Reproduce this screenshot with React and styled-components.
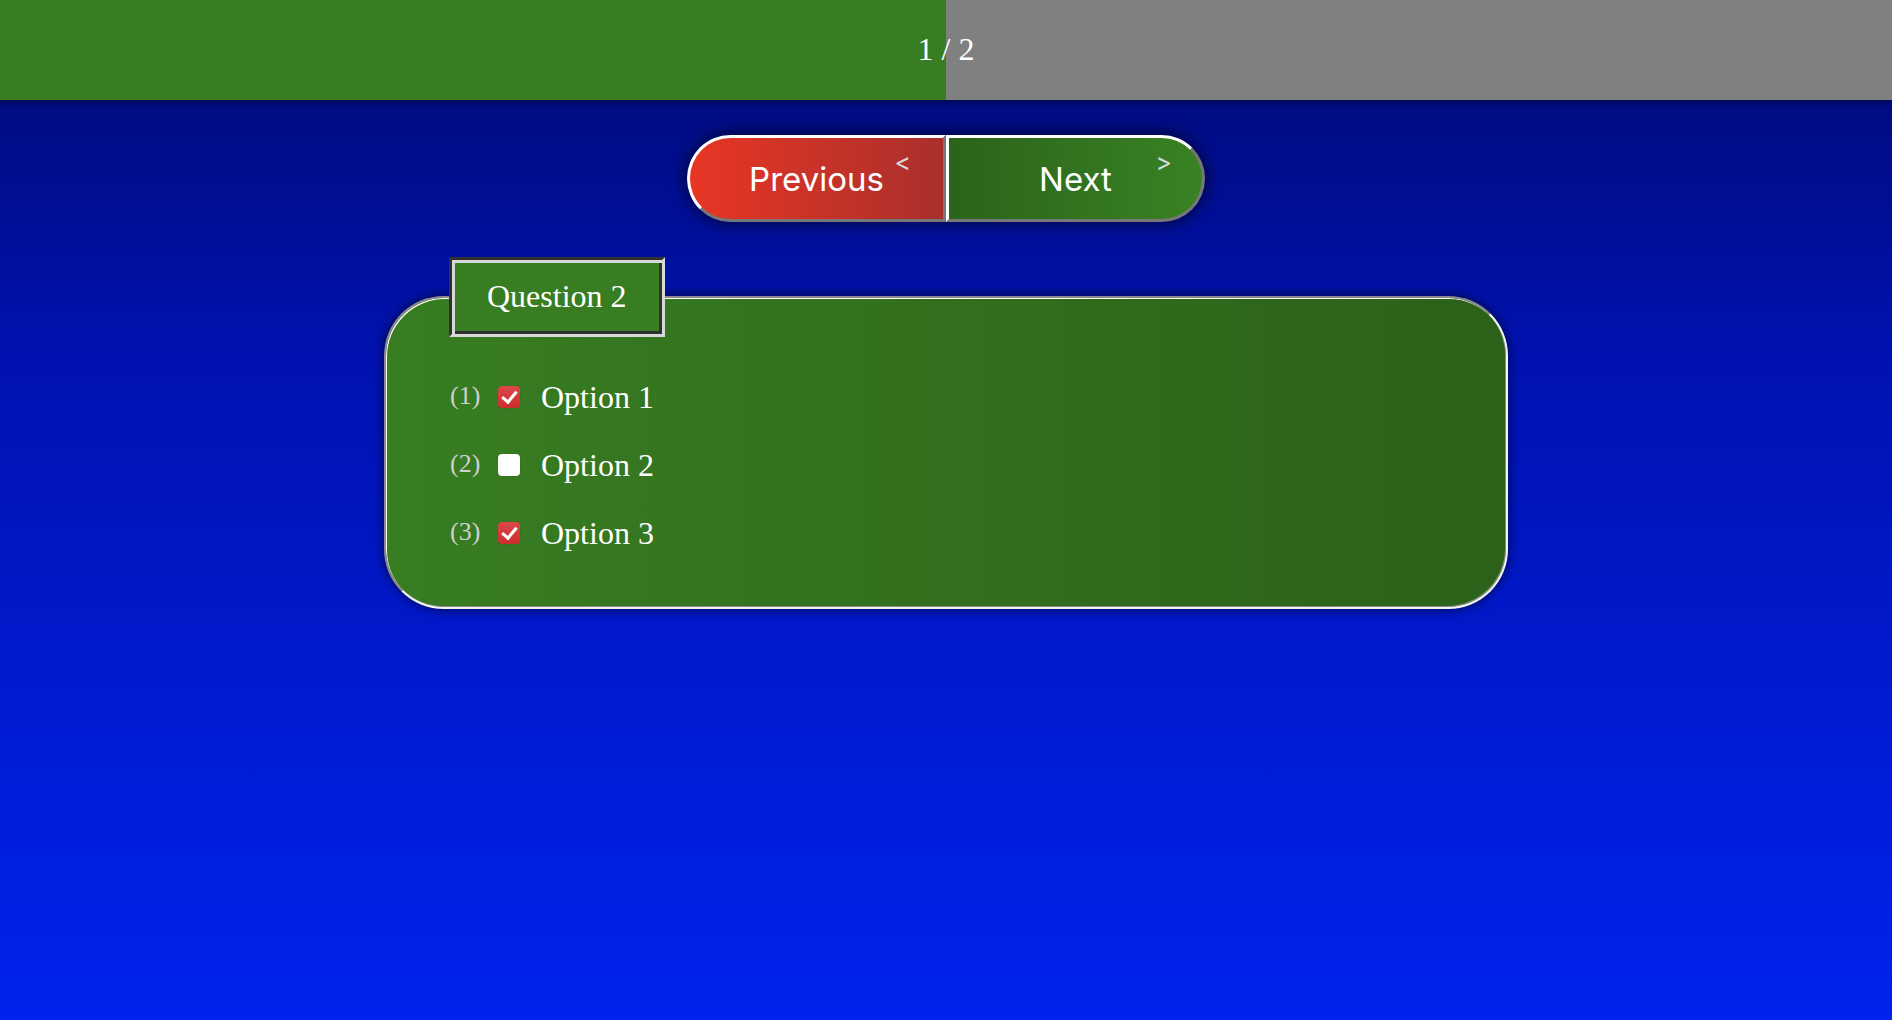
import styled, { createGlobalStyle } from "styled-components";

const GlobalStyle = createGlobalStyle`
  html, body, #root {
    margin: 0;
    height: 100%;
  }
  body {
    font-family: "Liberation Serif", "Times New Roman", serif;
    background: linear-gradient(to bottom, #000a70 0%, #0012b0 35%, #0022ee 100%);
    background-attachment: fixed;
  }
`;

const Page = styled.div`
  min-height: 100vh;
  display: flex;
  flex-direction: column;
  align-items: center;
`;

const Progress = styled.div`
  width: 100%;
  height: 100px;
  display: grid;
  background: #808080;
  box-shadow: 0 2px 6px rgba(0, 0, 0, 0.45);
`;

const ProgressFill = styled.div`
  grid-area: 1 / 1;
  background: #387d22;
`;

const ProgressLabel = styled.span`
  grid-area: 1 / 1;
  place-self: center;
  color: #fff;
  font-size: 32px;
  padding-bottom: 2px;
`;

const Nav = styled.nav`
  margin-top: 35px;
  display: flex;
  border-radius: 44px;
  box-shadow: 0 0 14px 4px rgba(0, 0, 0, 0.45);
`;

const NavButton = styled.button`
  position: relative;
  width: 259px;
  height: 87px;
  box-sizing: border-box;
  border: 3px solid;
  border-color: #fff #777 #777 #fff;
  border-radius: ${(p) => (p.$side === "left" ? "44px 0 0 44px" : "0 44px 44px 0")};
  background: ${(p) =>
    p.$side === "left"
      ? "linear-gradient(to right, #e83625, #a92f2c)"
      : "linear-gradient(to right, #2b631b, #398224)"};
  color: #fff;
  font-family: Inter, "Liberation Sans", sans-serif;
  font-size: 33px;
  font-weight: 400;
  cursor: pointer;
  padding: 0;

  &::after {
    content: "${(p) => p.$mark}";
    position: absolute;
    top: 9px;
    right: ${(p) => (p.$side === "left" ? "32px" : "30px")};
    font-size: 25px;
    color: #d8d8d8;
  }
`;

const Card = styled.fieldset`
  margin: 35px 0 0;
  width: 1124px;
  box-sizing: border-box;
  padding: 40px 64px 54px;
  border: 2px solid;
  border-color: #8a8a8a #f4f4f4 #f4f4f4 #8a8a8a;
  border-radius: 60px;
  background: linear-gradient(to right, #387d22, #2b6119);
  box-shadow: 0 0 10px 2px rgba(0, 0, 0, 0.45), inset 1px 1px 0 #fff, inset -1px -1px 0 #8a8a8a;
`;

const Legend = styled.legend`
  padding: 18px 35px 19px;
  margin-left: -1px;
  border: 3px solid;
  border-color: #303030 #d8d8d8 #d8d8d8 #303030;
  box-shadow: inset 3px 3px 0 #d8d8d8, inset -3px -3px 0 #303030;
  background: #387d22;
  color: #fff;
  font-size: 32px;
  line-height: 37px;
`;

const OptionList = styled.div`
  display: flex;
  flex-direction: column;
  gap: 28px;
`;

const OptionRow = styled.label`
  display: flex;
  align-items: center;
  height: 40px;
  cursor: pointer;
`;

const OptionIndex = styled.span`
  width: 48px;
  font-size: 26px;
  color: #cfcfcf;
  margin-top: -3px;
`;

const Box = styled.input`
  appearance: none;
  margin: 0 21px 0 0;
  width: 22px;
  height: 22px;
  border-radius: 4px;
  position: relative;
  background: ${(p) => (p.checked ? "linear-gradient(#dc4848, #cc2e2e)" : "#fff")};
  box-shadow: 0 0 1px rgba(0, 0, 0, 0.4);

  &::after {
    content: "";
    display: ${(p) => (p.checked ? "block" : "none")};
    position: absolute;
    left: 7px;
    top: 2px;
    width: 6px;
    height: 12px;
    border: solid #fff;
    border-width: 0 3px 3px 0;
    transform: rotate(40deg);
  }
`;

const OptionText = styled.span`
  color: #fff;
  font-size: 32px;
`;

const options = [
  { label: "Option 1", checked: true },
  { label: "Option 2", checked: false },
  { label: "Option 3", checked: true },
];

function App() {
  const current = 1;
  const total = 2;

  return (
    <Page>
      <GlobalStyle />
      <Progress>
        <ProgressFill style={{ width: `${(current / total) * 100}%` }} />
        <ProgressLabel>{current} / {total}</ProgressLabel>
      </Progress>

      <Nav>
        <NavButton $side="left" $mark="<">Previous</NavButton>
        <NavButton $side="right" $mark=">">Next</NavButton>
      </Nav>

      <Card>
        <Legend>Question 2</Legend>
        <OptionList>
          {options.map((opt, i) => (
            <OptionRow key={opt.label}>
              <OptionIndex>({i + 1})</OptionIndex>
              <Box type="checkbox" checked={opt.checked} readOnly />
              <OptionText>{opt.label}</OptionText>
            </OptionRow>
          ))}
        </OptionList>
      </Card>
    </Page>
  );
}

export default App;
